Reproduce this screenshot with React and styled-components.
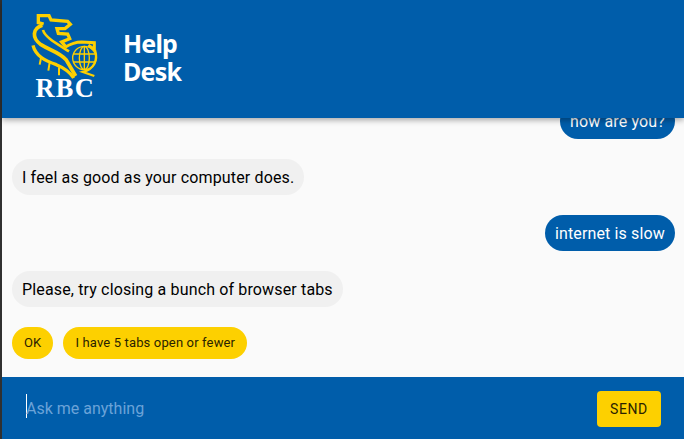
import React from 'react';
import styled, { createGlobalStyle } from 'styled-components';

const GlobalStyle = createGlobalStyle`
  html, body, #root {
    margin: 0;
    height: 100%;
  }
  body {
    background: #303030;
    font-family: Roboto, "Liberation Sans", sans-serif;
    overflow: hidden;
  }
`;

const messages = [
  { id: 1, text: 'how are you?', mine: true },
  { id: 2, text: 'I feel as good as your computer does.' },
  { id: 3, text: 'internet is slow', mine: true },
  { id: 4, text: 'Please, try closing a bunch of browser tabs' },
];

const chips = ['OK', 'I have 5 tabs open or fewer'];

const Logo = () => (
  <LogoSvg viewBox="85 30 225 270" aria-label="RBC">
    <g fill="none" stroke="#fdd000" strokeLinejoin="miter" strokeLinecap="butt">
      {/* head and jaw */}
      <path
        strokeWidth="10"
        d="M132 72 L116 68 L116 47 L148 47 L154 60 L204 64 L212 73 L196 86 L172 86 L176 100 L204 102 L210 116 L186 126 L198 140"
      />
      {/* mane stripes */}
      <path strokeWidth="11" d="M128 76 C98 86 96 114 124 134 C152 152 178 156 200 180 L228 228" />
      <path strokeWidth="8" d="M130 90 C136 112 170 130 208 154" />
      <path strokeWidth="10" d="M100 136 C108 168 136 182 170 194 C194 204 210 214 222 234" />
      <path strokeWidth="6" d="M124 174 L120 194 M150 188 L146 212 M178 202 L178 226" />
      {/* arm over the globe */}
      <path strokeWidth="9" d="M196 142 C212 132 226 126 246 126 L284 128 L284 148 L266 136" />
      <path strokeWidth="7" d="M286 150 C296 182 282 208 250 216 L284 228" />
      {/* globe */}
      <g strokeWidth="4">
        <circle cx="254" cy="174" r="35" />
        <ellipse cx="254" cy="174" rx="15" ry="35" />
        <path d="M254 139 V209 M220 162 H288 M220 186 H288" />
      </g>
    </g>
    <LogoText x="197" y="291" textAnchor="middle">RBC</LogoText>
  </LogoSvg>
);

const App = () => {
  return (
    <Page>
      <GlobalStyle />
      <Header>
        <Logo />
        <Title>
          Help
          <br />
          Desk
        </Title>
      </Header>
      <Messages>
        {messages.map((m) => (
          <Bubble key={m.id} $mine={m.mine}>
            {m.text}
          </Bubble>
        ))}
        <ChipRow>
          {chips.map((c) => (
            <Chip key={c}>{c}</Chip>
          ))}
        </ChipRow>
      </Messages>
      <InputBar>
        <Caret />
        <TextInput placeholder="Ask me anything" />
        <SendButton>SEND</SendButton>
      </InputBar>
    </Page>
  );
};

const Page = styled.div`
  display: flex;
  flex-direction: column;
  height: 100%;
  margin-left: 2px;
  background: #fafafa;
`;

const Header = styled.header`
  position: relative;
  z-index: 2;
  flex: 0 0 118px;
  display: flex;
  align-items: flex-start;
  gap: 20px;
  padding: 10px 0 0 26px;
  box-sizing: border-box;
  background: #005daa;
  box-shadow: 0 2px 6px rgba(0, 0, 0, 0.35);
`;

const LogoSvg = styled.svg`
  flex: none;
  width: 75px;
  height: 90px;
  overflow: visible;
`;

const LogoText = styled.text`
  font-family: "Liberation Serif", serif;
  font-size: 79px;
  font-weight: 700;
  letter-spacing: 4px;
  fill: #fff;
`;

const Title = styled.h1`
  margin: 19px 0 0;
  color: #fff;
  font-family: "Noto Sans", sans-serif;
  font-size: 25px;
  font-weight: 700;
  line-height: 28px;
  letter-spacing: -0.8px;
`;

const Messages = styled.main`
  flex: 1;
  min-height: 0;
  overflow: hidden;
  display: flex;
  flex-direction: column;
  justify-content: flex-end;
  gap: 20px;
  padding: 0 9px 18px 10px;
`;

const Bubble = styled.div`
  align-self: ${(p) => (p.$mine ? 'flex-end' : 'flex-start')};
  flex: none;
  height: 36px;
  padding: 0 10px;
  border-radius: 18px;
  background: ${(p) => (p.$mine ? '#005daa' : '#f0f0f0')};
  color: ${(p) => (p.$mine ? '#fff' : '#000')};
  font-size: 16px;
  line-height: 38px;
  letter-spacing: 0.145px;
`;

const ChipRow = styled.div`
  flex: none;
  display: flex;
  gap: 10px;
`;

const Chip = styled.button`
  height: 32px;
  padding: 0 12px 2px;
  border: 0;
  border-radius: 16px;
  background: #fdd000;
  color: #2a2300;
  font-family: inherit;
  font-size: 13px;
  letter-spacing: 0.15px;
`;

const InputBar = styled.footer`
  flex: 0 0 62px;
  box-sizing: border-box;
  display: flex;
  align-items: center;
  padding: 0 23px 0 24px;
  background: #005daa;
`;

const Caret = styled.span`
  flex: none;
  width: 1px;
  height: 24px;
  margin: 0 -1px 4px 0;
  background: #fff;
`;

const TextInput = styled.input`
  flex: 1;
  min-width: 0;
  padding: 0;
  border: 0;
  outline: 0;
  background: transparent;
  color: #fff;
  font-family: inherit;
  font-size: 16px;
  &::placeholder {
    color: #6ba3d8;
    opacity: 1;
  }
`;

const SendButton = styled.button`
  flex: none;
  width: 64px;
  height: 36px;
  margin-top: 2px;
  border: 0;
  border-radius: 4px;
  background: #fdd000;
  color: #2a2300;
  font-family: inherit;
  font-size: 14px;
  font-weight: 400;
  letter-spacing: 0.6px;
`;

export default App;
